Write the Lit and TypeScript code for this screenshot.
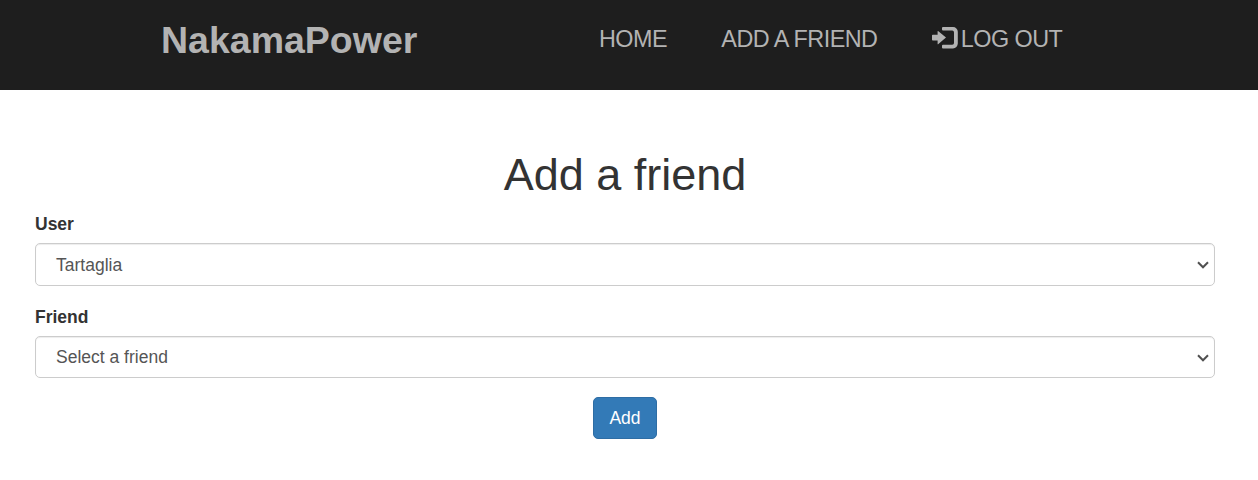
import { LitElement, html, css } from "lit";
import { customElement } from "lit/decorators.js";

@customElement("app-root")
export class AppRoot extends LitElement {
  static styles = css`
    :host { display: block; min-height: 480px; background: #fff; color: #333; font: 17.5px/25px "Liberation Sans", Arial, sans-serif; }
    * { box-sizing: border-box; }
    header { height: 90px; background: #1e1e1e; display: flex; color: #b3b3b3; padding-left: 161px; }
    .brand { width: 438px; font-size: 37.5px; font-weight: 700; line-height: 80px; }
    nav { display: flex; gap: 54.3px; font-size: 23.4px; line-height: 78px; letter-spacing: -.53px; white-space: nowrap; }
    .out { display: flex; }
    .out svg { width: 26px; height: 22px; margin: 27px 3px 0 0; }
    main { padding: 59px 43px 0 35px; }
    h1 { margin: 0; font-size: 45px; line-height: 51px; font-weight: 400; text-align: center; }
    label { display: block; font-weight: 700; margin: 12px 0 6px; }
    .select { height: 43px; border: 1px solid #ccc; border-radius: 5px; box-shadow: inset 0 1px 1px rgba(0,0,0,.075); display: flex; align-items: center; justify-content: space-between; padding: 1px 5px 0 20px; color: #555; }
    .select svg { width: 12px; height: 8px; }
    .second { margin-top: 19px; }
    .short { height: 42px; }
    .actions { display: flex; justify-content: center; margin-top: 19px; }
    button { width: 64px; height: 42px; border: 1px solid #2e6da4; border-radius: 5px; background: #337ab7; color: #fff; font: inherit; padding: 0; }
  `;
  chevron() {
    return html`<svg viewBox="0 0 12 8"><path d="M1 1.3 6 6.3 11 1.3" fill="none" stroke="#505050" stroke-width="2"/></svg>`;
  }
  render() {
    return html`
      <header>
        <div class="brand">NakamaPower</div>
        <nav><span>HOME</span><span>ADD A FRIEND</span>
          <span class="out"><svg viewBox="0 0 26 22"><path fill="#b3b3b3" d="M.8 7.7H5.6V4.5Q5.6 3.5 6.4 4.2L14 10.6 6.4 17Q5.6 17.7 5.6 16.7V13.5H.8A.8.8 0 0 1 0 12.7V8.5A.8.8 0 0 1 .8 7.7zM11 0h10a4.8 4.8 0 0 1 4.8 4.8v11.8a4.8 4.8 0 0 1-4.8 4.8H11a1 1 0 0 1-1-1v-1.6a1 1 0 0 1 1-1h9.2a1.8 1.8 0 0 0 1.8-1.8V5.4a1.8 1.8 0 0 0-1.8-1.8H11a1 1 0 0 1-1-1V1a1 1 0 0 1 1-1z"/></svg><span>LOG OUT</span></span>
        </nav>
      </header>
      <main>
        <h1>Add a friend</h1>
        <label>User</label>
        <div class="select"><span>Tartaglia</span>${this.chevron()}</div>
        <label class="second">Friend</label>
        <div class="select short"><span>Select a friend</span>${this.chevron()}</div>
        <div class="actions"><button>Add</button></div>
      </main>`;
  }
}
